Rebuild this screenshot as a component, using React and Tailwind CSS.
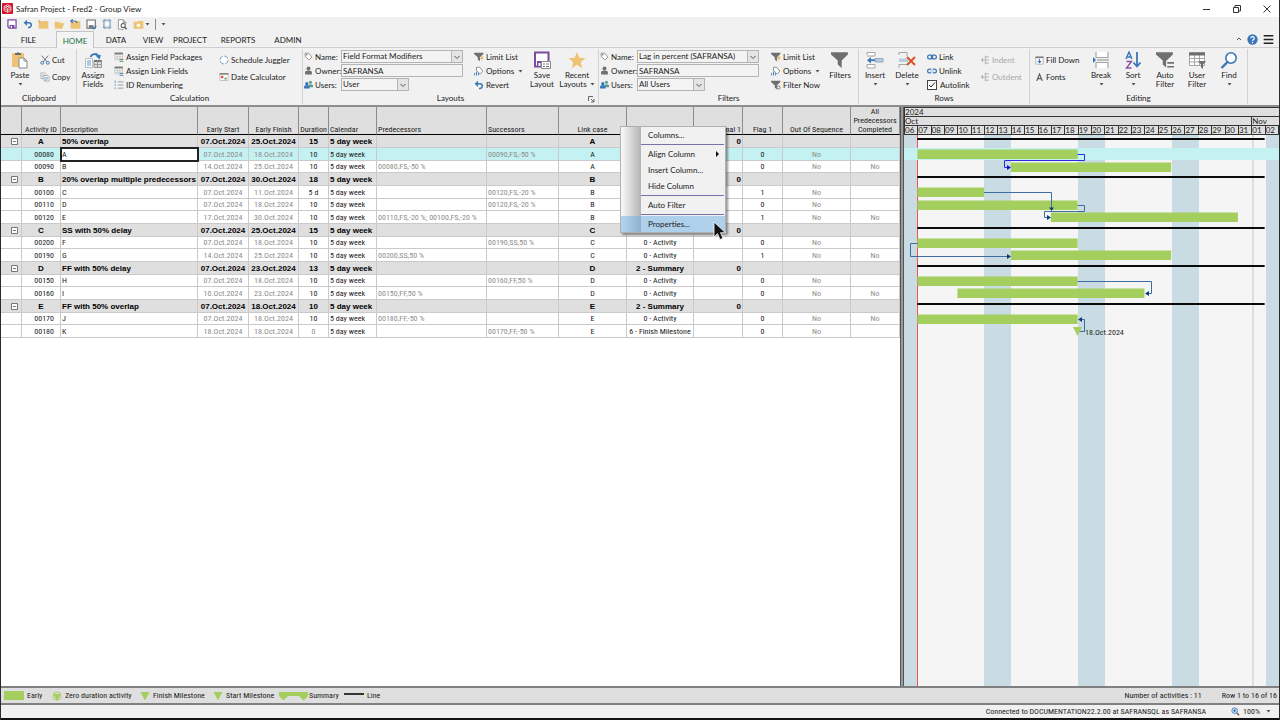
import { useState } from "react";

const DAYS = [
  "06", "07", "08", "09", "10", "11", "12", "13", "14", "15", "16", "17", "18", "19",
  "20", "21", "22", "23", "24", "25", "26", "27", "28", "29", "30", "31", "01", "02",
];
const WEEKEND = ["06", "12", "13", "19", "20", "26", "27", "02"];

const group = (id, description, finish, duration, type) => ({
  group: true, id, description, start: "07.Oct.2024", finish, duration, link: id, type, decimal: "0",
});

const task = (id, description, start, finish, duration, pred, succ, link, type, flag, done) => ({
  id, description, start, finish, duration, pred, succ, link, type, flag, sequence: "No", done,
});

const ROWS = [
  group("A", "50% overlap", "25.Oct.2024", "15", ""),
  task("00080", "A", "07.Oct.2024", "18.Oct.2024", "10", "", "00090,FS,-50 %", "A", "", "0", ""),
  task("00090", "B", "14.Oct.2024", "25.Oct.2024", "10", "00080,FS,-50 %", "", "A", "", "0", "No"),
  group("B", "20% overlap multiple predecessors", "30.Oct.2024", "18", ""),
  task("00100", "C", "07.Oct.2024", "11.Oct.2024", "5 d", "", "00120,FS,-20 %", "B", "", "1", ""),
  task("00110", "D", "07.Oct.2024", "18.Oct.2024", "10", "", "00120,FS,-20 %", "B", "", "0", ""),
  task("00120", "E", "17.Oct.2024", "30.Oct.2024", "10", "00110,FS,-20 %; 00100,FS,-20 %", "", "B", "", "1", "No"),
  group("C", "SS with 50% delay", "25.Oct.2024", "15", ""),
  task("00200", "F", "07.Oct.2024", "18.Oct.2024", "10", "", "00190,SS,50 %", "C", "0 - Activity", "0", ""),
  task("00190", "G", "14.Oct.2024", "25.Oct.2024", "10", "00200,SS,50 %", "", "C", "0 - Activity", "1", "No"),
  group("D", "FF with 50% delay", "23.Oct.2024", "13", "2 - Summary"),
  task("00150", "H", "07.Oct.2024", "18.Oct.2024", "10", "", "00160,FF,50 %", "D", "0 - Activity", "0", ""),
  task("00160", "I", "10.Oct.2024", "23.Oct.2024", "10", "00150,FF,50 %", "", "D", "0 - Activity", "0", "No"),
  group("E", "FF with 50% overlap", "18.Oct.2024", "10", "2 - Summary"),
  task("00170", "J", "07.Oct.2024", "18.Oct.2024", "10", "00180,FF,-50 %", "", "E", "0 - Activity", "0", "No"),
  task("00180", "K", "18.Oct.2024", "18.Oct.2024", "0", "", "00170,FF,-50 %", "E", "6 - Finish Milestone", "0", ""),
];

/* ---------- icons ---------- */

const Svg = ({ size = 10, box = 16, children }) => (
  <svg width={size} height={size} viewBox={`0 0 ${box} ${box}`} fill="none" className="shrink-0" aria-hidden="true">
    {children}
  </svg>
);

const LogoIcon = () => (
  <Svg size={11}>
    <rect width="16" height="16" rx="1" fill="#d8142c" />
    <path d="M8 2.500 13 5v6l-5 2.500L3 11V5zM3 5l5 3 5-3M8 8v5.500M5.500 3.700l5 2.800M10.500 3.700l-5 2.800M3 8l5 3 5-3" stroke="#fff" strokeWidth="1" />
  </Svg>
);

const SaveIcon = ({ size = 10, color = "#7b4ba0" }) => (
  <Svg size={size}>
    <path d="M1.500 1.500h13v13h-11l-2-2z" stroke={color} strokeWidth="2" fill="#fff" />
    <path d="M4 9.500h8v5H4z" fill={color} />
    <path d="M6 11h2v3H6z" fill="#fff" />
  </Svg>
);

const UndoIcon = ({ size = 10 }) => (
  <Svg size={size}>
    <path d="M3 6h6.500a3.700 3.700 0 0 1 0 7.500H8" stroke="#3b76b8" strokeWidth="2.400" />
    <path d="M6.500 1 1 6l5.500 5z" fill="#3b76b8" />
  </Svg>
);

const FolderIcon = ({ variant }) => (
  <Svg size={11}>
    {variant === "open" ? (
      <path d="M4 6h11l-3 8H1zM1 12V4h4l1 1h6" fill="#eec373" />
    ) : (
      <path d="M1 4h5l2 -1h7v11H1z" fill="#eec373" />
    )}
    {variant === "new" && <path d="M2 1v5M0 3.500h5" stroke="#e8b45a" strokeWidth="1.500" />}
    {variant === "back" && <path d="M1 3h6q3 0 3 3M4 .5 1 3l3 2.500" stroke="#3b76b8" strokeWidth="1.600" />}
    {variant === "star" && <circle cx="8" cy="9" r="2.500" fill="#fff" />}
  </Svg>
);

const SaveAsIcon = () => (
  <Svg size={11}>
    <path d="M1.500 1.500h12v12h-12z" stroke="#666" strokeWidth="1.500" fill="#fff" />
    <path d="M4 9h7v4H4z" fill="#777" />
    <path d="m10 15 5-5" stroke="#3b76b8" strokeWidth="2" />
  </Svg>
);

const PageIcon = () => (
  <Svg size={10}>
    <path d="M2.500 1.500h11v13h-11z" stroke="#888" fill="#fff" />
    <path d="M4.500 0v16M11.500 0v16M1 3h14M1 13h14" stroke="#5b95c9" strokeWidth="1" />
  </Svg>
);

const PreviewIcon = () => (
  <Svg size={11}>
    <path d="M10 15H2V1h7l4 4v2M9 1v4h4" stroke="#888" strokeWidth="1.200" fill="#fff" />
    <circle cx="9" cy="9.500" r="3" stroke="#555" strokeWidth="1.500" />
    <path d="m11 12 3 3" stroke="#555" strokeWidth="2" />
  </Svg>
);

const PasteIcon = () => (
  <Svg size={18} box={18}>
    <rect x="1" y="2" width="12" height="14" fill="#eec373" />
    <path d="M4 4V2h2q1-2 2 0h2v2z" fill="#6b6b6b" />
    <path d="M8 7h5l3 3v7H8z" fill="#fff" stroke="#8a8a8a" />
    <path d="M13 7v3h3" stroke="#8a8a8a" />
  </Svg>
);

const CutIcon = () => (
  <Svg>
    <path d="m3 1 8 10M13 1 5 11" stroke="#6b6b6b" strokeWidth="1.500" />
    <circle cx="3.500" cy="12.500" r="2.300" stroke="#3b76b8" strokeWidth="1.500" />
    <circle cx="12.500" cy="12.500" r="2.300" stroke="#3b76b8" strokeWidth="1.500" />
  </Svg>
);

const CopyIcon = () => (
  <Svg>
    <path d="M1.500 1.500h6l2 2v7h-8z" fill="#fff" stroke="#8a8a8a" />
    <path d="M6.500 5.500h6l2 2v7h-8z" fill="#fff" stroke="#8a8a8a" />
    <path d="M3 5h4M3 7.500h3M8 9h5M8 11h5M8 13h3" stroke="#4b86c2" />
  </Svg>
);

const AssignFieldsIcon = () => (
  <Svg size={18} box={18}>
    <path d="M6.500 6a4.500 4.500 0 0 1 8-1" stroke="#3b76b8" strokeWidth="1.800" />
    <path d="m11.500 4.500 5.500-.5-1.500 4.500z" fill="#3b76b8" />
    <path d="M1.500 7.500h7v9h-7z" fill="#fff" stroke="#bbb" />
    <path d="M3 10h4M3 12h4M3 14h4" stroke="#5b95c9" />
    <path d="M10 9.500h7.500v7H10z" fill="#ddd" stroke="#999" />
    <path d="M10 10h7.500" stroke="#777" strokeWidth="2" />
    <path d="M10 13.500h7.500M13.500 10v6.500" stroke="#999" />
  </Svg>
);

const GridIcon = ({ accent }) => (
  <Svg>
    <path d="M1.500 1.500h12v11h-12zM1.500 7h12M1.500 10h12M5.500 4v8M9.500 4v8" stroke="#b5b5b5" fill="#fff" />
    <path d="M1 2.500h13" stroke="#7b7b7b" strokeWidth="3" />
    <path d="M9 12h6M9 15h6" stroke={accent} strokeWidth="1.500" />
  </Svg>
);

const NumberedIcon = () => (
  <Svg>
    <path d="M2 1v4M.5 8h3M.5 13h3" stroke="#4b86c2" strokeWidth="1.300" />
    <path d="M6 3h9M6 8h9M6 13h9" stroke="#8a8a8a" strokeWidth="1.300" />
  </Svg>
);

const JugglerIcon = () => (
  <Svg>
    <circle cx="8" cy="8" r="6.500" stroke="#4b86c2" strokeWidth="1.200" strokeDasharray="8 2" fill="#fff" />
  </Svg>
);

const CalendarIcon = () => (
  <Svg>
    <path d="M1.500 2.500h13v11h-13z" stroke="#a5a5a5" fill="#fff" />
    <path d="M1 3h14" stroke="#7b7b7b" strokeWidth="2.500" />
    <path d="M3 6h4v4H3z" fill="#d9534f" />
    <path d="M9 9h3v3H9z" fill="#4f8f5a" />
  </Svg>
);

const TagIcon = () => (
  <Svg size={9}>
    <path d="M2 2h6l6 7-5 5-7-6z" fill="#fff" stroke="#777" strokeWidth="1.300" />
    <circle cx="5" cy="5" r="1.300" fill="#555" />
  </Svg>
);

const OwnerIcon = () => (
  <Svg size={9}>
    <circle cx="8" cy="4.500" r="3.500" fill="#6f6f6f" />
    <path d="M2 15v-4q0-3 6-3t6 3v4z" fill="#6f6f6f" />
  </Svg>
);

const UsersIcon = () => (
  <Svg size={9}>
    <circle cx="11.500" cy="4" r="2.700" fill="#5c9e8e" />
    <path d="M8 13V9q4-3 8 0v4z" fill="#5c9e8e" />
    <circle cx="5" cy="6.500" r="3" fill="#3b76b8" />
    <path d="M0 15v-3q0-3 5-3t5 3v3z" fill="#3b76b8" />
  </Svg>
);

const FunnelIcon = ({ size = 10, mark }) => (
  <Svg size={size}>
    <path d="M0 1h15v2L9.500 8.500V15L6 12V8.500L0 3z" fill="#6f6f6f" />
    {mark === "flash" && <path d="m12 7-2 4h3l-2 4 4-5h-2l2-3z" fill="#e6ac3e" />}
    {mark === "lines" && <path d="M9 10.500h7M9 14.500h7" stroke="#f1f1f1" strokeWidth="4" />}
    {mark === "lines" && <path d="M10 10.500h6M10 14h6" stroke="#6f6f6f" strokeWidth="1.500" />}
    {mark === "gear" && <circle cx="12" cy="12" r="2.500" stroke="#6f6f6f" strokeWidth="1.500" fill="#fff" />}
  </Svg>
);

const OptionsIcon = () => (
  <Svg>
    <path d="M4 2h5l5 6-4 5-6-6z" fill="#fff" stroke="#777" strokeWidth="1.300" />
    <path d="M1 15v-4M4 15V9M7 15v-4" stroke="#4b86c2" strokeWidth="1.600" />
  </Svg>
);

const SaveLayoutIcon = () => (
  <Svg size={18} box={18}>
    <path d="M2 1.500h13.500v14H2z" fill="#fff" stroke="#7b4ba0" strokeWidth="2" />
    <path d="M4 10h8v6H4z" fill="#7b4ba0" />
    <path d="M5.500 12h2v3h-2z" fill="#fff" />
    <path d="M8.500 10.500h9v7h-9z" fill="#fff" stroke="#8a8a8a" />
    <path d="M10 13h2M13 13h3M10 15.500h2M13 15.500h3" stroke="#777" />
  </Svg>
);

const StarIcon = () => (
  <Svg size={18} box={18}>
    <path d="m9 1 2.300 5.800 6.200.4-4.800 4 1.600 6L9 13.800 3.700 17.200l1.600-6-4.800-4 6.200-.4z" fill="#eec373" />
  </Svg>
);

const InsertIcon = () => (
  <Svg size={18} box={18}>
    <path d="M1 4V1.500h8V5H1M1 17v-3.500h8V17z" stroke="#a5a5a5" fill="#fff" />
    <path d="M9 7.500h8v3.500H9z" fill="#b9cde0" stroke="#8fa9c0" />
    <path d="M9 9.200H3" stroke="#3b76b8" strokeWidth="1.800" />
    <path d="M5 6 1 9.200 5 12.500z" fill="#3b76b8" />
  </Svg>
);

const DeleteIcon = () => (
  <Svg size={18} box={18}>
    <path d="M1 4V1.500h8V5M1 17v-3.500h8" stroke="#a5a5a5" />
    <path d="M1 7.500h9v3.500H1z" fill="#b9cde0" />
    <path d="m9 6 8 8M17 6l-8 8" stroke="#d9512c" strokeWidth="2" />
  </Svg>
);

const LinkIcon = ({ broken }) => (
  <Svg>
    <rect x="1" y="5" width="8" height="6" rx="3" stroke="#3b76b8" strokeWidth="2" />
    <rect x="7" y="5" width="8" height="6" rx="3" stroke="#3b76b8" strokeWidth="2" />
    {broken && <path d="M8 3v10" stroke="#f1f1f1" strokeWidth="2.500" />}
  </Svg>
);

const IndentIcon = () => (
  <Svg>
    <path d="M1 8h6M4 5v6M8.500 1v14M9 3h5M9 8h5M9 13h5" stroke="#b0b0b0" strokeWidth="1.600" />
  </Svg>
);

const FillDownIcon = () => (
  <Svg size={9}>
    <path d="M1.500 1.500h13v13h-13z" stroke="#8a8a8a" fill="#fff" />
    <path d="M1 2.500h14" stroke="#777" strokeWidth="2.500" />
    <path d="M8 5v6" stroke="#3b76b8" strokeWidth="2" />
    <path d="M4 9h8l-4 4.500z" fill="#3b76b8" />
  </Svg>
);

const FontsIcon = () => (
  <Svg size={9}>
    <path d="M3 14 8 2l5 12M5 10h6" stroke="#5a5a5a" strokeWidth="2.200" />
  </Svg>
);

const BreakIcon = () => (
  <Svg size={18} box={18}>
    <path d="M4 1v5.500h12V1M4 17v-5.500h12V17" stroke="#a5a5a5" strokeWidth="1.200" fill="#fff" />
    <path d="M5 9h12" stroke="#8a8a8a" />
    <path d="m1 6 3 3-3 3z" fill="#3b76b8" />
  </Svg>
);

const SortIcon = () => (
  <Svg size={18} box={18}>
    <path d="m2 8 3-7 3 7M3 6h4" stroke="#3b76b8" strokeWidth="1.400" />
    <path d="M2.500 10.500h5L2.500 17h5" stroke="#8c4fa8" strokeWidth="1.400" />
    <path d="M13 1v14M9.500 11.500 13 15.500l3.500-4" stroke="#3b76b8" strokeWidth="1.800" />
  </Svg>
);

const UserFilterIcon = () => (
  <Svg size={18} box={18}>
    <path d="M1.500 1.500h15v13h-15zM1.500 7.500h15M1.500 11h15M6.500 4v10M11.500 4v10" stroke="#a5a5a5" fill="#fff" />
    <path d="M1 3h16" stroke="#6f6f6f" strokeWidth="3" />
    <path d="M10 10h8l-3 3.500V18l-2-1.500v-3z" fill="#6f6f6f" />
  </Svg>
);

const FindIcon = () => (
  <Svg size={18} box={18}>
    <circle cx="11" cy="7" r="5.200" stroke="#3b76b8" strokeWidth="1.600" fill="#fff" />
    <path d="m7.500 11-6 6" stroke="#3b76b8" strokeWidth="2.400" />
  </Svg>
);

const Caret = () => (
  <svg width="5" height="3" viewBox="0 0 5 3" className="shrink-0" aria-hidden="true">
    <path d="M.5 0h4l-2 2.500z" fill="#555" />
  </svg>
);

/* ---------- title, tabs and ribbon ---------- */

const TitleBar = () => (
  <header className="flex h-[17px] items-center bg-white pl-px pr-[7px]">
    <LogoIcon />
    <h1 className="ml-[3px] flex-1 text-[8px]">Safran Project - Fred2 - Group View</h1>
    <div className="flex items-center gap-[20px]">
      <button aria-label="Minimize">
        <Svg size={10} box={10}><path d="M1 5.500h7" stroke="#333" /></Svg>
      </button>
      <button aria-label="Restore">
        <Svg size={10} box={10}><path d="M1.500 3.500h5v5h-5zM3 3V1.500h5.500V7H7" stroke="#333" /></Svg>
      </button>
      <button aria-label="Close">
        <Svg size={10} box={10}><path d="m1.500 1.500 7 7M8.500 1.500l-7 7" stroke="#333" /></Svg>
      </button>
    </div>
  </header>
);

const QuickAccess = () => (
  <div className="flex h-[14px] items-center gap-[5px] pl-[6px]">
    <button aria-label="Save"><SaveIcon /></button>
    <button aria-label="Undo" className="ml-px"><UndoIcon /></button>
    <button aria-label="New"><FolderIcon variant="new" /></button>
    <button aria-label="Open"><FolderIcon variant="open" /></button>
    <button aria-label="Close project"><FolderIcon variant="back" /></button>
    <button aria-label="Save as"><SaveAsIcon /></button>
    <button aria-label="Page setup"><PageIcon /></button>
    <button aria-label="Print preview"><PreviewIcon /></button>
    <button aria-label="Favorites" className="flex items-center gap-px">
      <FolderIcon variant="star" />
      <Caret />
    </button>
    <span className="h-[11px] w-px bg-[#8a8a8a]" />
    <button aria-label="Customize"><Caret /></button>
  </div>
);

const TABS = [
  { name: "FILE", width: "w-[55px]" },
  { name: "HOME", width: "w-[38px]" },
  { name: "DATA", width: "w-[44px]" },
  { name: "VIEW", width: "w-[30px]" },
  { name: "PROJECT", width: "w-[44px]" },
  { name: "REPORTS", width: "w-[52px]" },
  { name: "ADMIN", width: "w-[48px]" },
];

const TabStrip = () => {
  const [active, setActive] = useState("HOME");

  return (
    <nav className="flex h-[17px] items-stretch border-b border-[#cfcfcf] pr-[5px]">
      {TABS.map((tab) => (
        <button
          key={tab.name}
          onClick={() => setActive(tab.name)}
          className={`${tab.width} pt-[2px] text-[8px] ${
            active === tab.name
              ? "-mb-px border border-b-0 border-[#c4c4c4] bg-[#f4f4f4] text-[#217346]"
              : ""
          }`}
        >
          {tab.name}
        </button>
      ))}
      <div className="ml-auto flex items-center gap-[5px]">
        <Svg size={6} box={6}><path d="m1 4 2-2 2 2" stroke="#555" /></Svg>
        <button aria-label="Help">
          <Svg size={11}>
            <circle cx="8" cy="8" r="7.500" fill="#3b76b8" />
            <path d="M5.500 6.300a2.500 2.500 0 1 1 3.500 2.200q-1 .5-1 1.700M8 11.500v1.800" stroke="#fff" strokeWidth="1.700" />
          </Svg>
        </button>
        <button aria-label="Menu">
          <Svg size={11}><path d="M1 2.500h14M1 8h14M1 13.500h14" stroke="#222" strokeWidth="2" /></Svg>
        </button>
      </div>
    </nav>
  );
};

const RibbonGroup = ({ title, width, launcher, children }) => (
  <section className={`${width} relative flex shrink-0 flex-col border-r border-[#d2d2d2]`}>
    <div className="flex h-[44px] items-start">{children}</div>
    <h2 className="text-center leading-[12px]">{title}</h2>
    {launcher && (
      <button aria-label={`${title} settings`} className="absolute bottom-px right-[3px]">
        <Svg size={7} box={7}><path d="M.5 5V.5H5M3 3l3 3M6 3v3H3" stroke="#666" /></Svg>
      </button>
    )}
  </section>
);

const BigButton = ({ icon, lines, width = "w-[32px]", menu }) => (
  <button className={`${width} flex shrink-0 flex-col items-center pt-[2px] leading-[9px]`}>
    {icon}
    <span className="mt-[2px]">{lines[0]}</span>
    <span className="flex h-[9px] items-center gap-[3px]">
      {lines[1]}
      {menu && <Caret />}
    </span>
  </button>
);

const SmallButton = ({ icon, children, menu, disabled }) => (
  <button
    disabled={disabled}
    className={`flex items-center gap-[2px] whitespace-nowrap leading-[10px] ${disabled ? "text-[#a8a8a8]" : ""}`}
  >
    {icon}
    {children}
    {menu && <span className="pl-[2px]"><Caret /></span>}
  </button>
);

const Stack3 = ({ width, children }) => (
  <div className={`${width} flex shrink-0 flex-col gap-[4px] pt-[3px]`}>{children}</div>
);

const Stack2 = ({ width, children }) => (
  <div className={`${width} flex shrink-0 flex-col gap-[7px] pt-[6px]`}>{children}</div>
);

const Combo = ({ id, value, width }) => (
  <div className={`${width} relative h-[13px]`}>
    <select
      id={id}
      defaultValue={value}
      className="h-full w-full appearance-none border border-[#b4b4b4] bg-[#f3f3f3] pl-px pr-[12px] leading-[11px] outline-none"
    >
      <option>{value}</option>
    </select>
    <span className="pointer-events-none absolute inset-y-0 right-0 flex w-[12px] items-center justify-center border border-[#b4b4b4] bg-[#e4e4e4]">
      <Svg size={8} box={8}><path d="m1.500 3 2.500 2.500L6.500 3" stroke="#555" /></Svg>
    </span>
  </div>
);

const Selector = ({ prefix, name, users }) => (
  <div className="grid shrink-0 grid-cols-[11px_26px_122px] items-center gap-y-px pl-px pt-px">
    <TagIcon />
    <label htmlFor={`${prefix}-name`}>Name:</label>
    <Combo id={`${prefix}-name`} value={name} width="w-full" />
    <OwnerIcon />
    <label htmlFor={`${prefix}-owner`}>Owner:</label>
    <input
      id={`${prefix}-owner`}
      defaultValue="SAFRANSA"
      className="h-[13px] w-full border border-[#b4b4b4] bg-[#f3f3f3] px-px leading-[11px] outline-none"
    />
    <UsersIcon />
    <label htmlFor={`${prefix}-users`}>Users:</label>
    <Combo id={`${prefix}-users`} value={users} width="w-[68px]" />
  </div>
);

const Ribbon = () => (
  <div className="flex h-[57px] overflow-hidden pb-px pl-px pt-px text-[8px]">
    <RibbonGroup title="Clipboard" width="w-[75px]">
      <BigButton icon={<PasteIcon />} lines={["Paste"]} width="w-[36px]" menu />
      <Stack2 width="ml-[2px] w-[36px]">
        <SmallButton icon={<CutIcon />}>Cut</SmallButton>
        <SmallButton icon={<CopyIcon />}>Copy</SmallButton>
      </Stack2>
    </RibbonGroup>

    <RibbonGroup title="Calculation" width="w-[226px]">
      <BigButton icon={<AssignFieldsIcon />} lines={["Assign", "Fields"]} />
      <Stack3 width="ml-[5px] w-[105px]">
        <SmallButton icon={<GridIcon accent="#5b8f6b" />}>Assign Field Packages</SmallButton>
        <SmallButton icon={<GridIcon accent="#4b86c2" />}>Assign Link Fields</SmallButton>
        <SmallButton icon={<NumberedIcon />}>ID Renumbering</SmallButton>
      </Stack3>
      <Stack2 width="w-[80px]">
        <SmallButton icon={<JugglerIcon />}>Schedule Juggler</SmallButton>
        <SmallButton icon={<CalendarIcon />}>Date Calculator</SmallButton>
      </Stack2>
    </RibbonGroup>

    <RibbonGroup title="Layouts" width="w-[296px]" launcher>
      <Selector prefix="layout" name="Field Format Modifiers" users="User" />
      <Stack3 width="ml-[11px] w-[52px]">
        <SmallButton icon={<FunnelIcon mark="flash" />}>Limit List</SmallButton>
        <SmallButton icon={<OptionsIcon />} menu>Options</SmallButton>
        <SmallButton icon={<UndoIcon />}>Revert</SmallButton>
      </Stack3>
      <BigButton icon={<SaveLayoutIcon />} lines={["Save", "Layout"]} />
      <BigButton icon={<StarIcon />} lines={["Recent", "Layouts"]} width="w-[38px]" menu />
    </RibbonGroup>

    <RibbonGroup title="Filters" width="w-[260px]">
      <Selector prefix="filter" name="Lag in percent (SAFRANSA)" users="All Users" />
      <Stack3 width="ml-[12px] w-[53px]">
        <SmallButton icon={<FunnelIcon mark="flash" />}>Limit List</SmallButton>
        <SmallButton icon={<OptionsIcon />} menu>Options</SmallButton>
        <SmallButton icon={<FunnelIcon mark="gear" />}>Filter Now</SmallButton>
      </Stack3>
      <BigButton icon={<FunnelIcon size={18} />} lines={["Filters"]} />
    </RibbonGroup>

    <RibbonGroup title="Rows" width="w-[171px]">
      <BigButton icon={<InsertIcon />} lines={["Insert"]} menu />
      <BigButton icon={<DeleteIcon />} lines={["Delete"]} menu />
      <Stack3 width="ml-[4px] w-[53px]">
        <SmallButton icon={<LinkIcon />}>Link</SmallButton>
        <SmallButton icon={<LinkIcon broken />}>Unlink</SmallButton>
        <label className="relative flex items-center gap-[3px] leading-[10px]">
          <input type="checkbox" defaultChecked className="peer sr-only" />
          <span className="flex size-[10px] items-center justify-center border border-[#444] bg-white">
            <Svg size={8} box={8}><path d="m1 4 2 2 4-4.500" stroke="#222" /></Svg>
          </span>
          Autolink
        </label>
      </Stack3>
      <Stack2 width="w-[44px]">
        <SmallButton icon={<IndentIcon />} disabled>Indent</SmallButton>
        <SmallButton icon={<IndentIcon />} disabled>Outdent</SmallButton>
      </Stack2>
    </RibbonGroup>

    <RibbonGroup title="Editing" width="w-[218px]">
      <Stack2 width="ml-[5px] w-[50px]">
        <SmallButton icon={<FillDownIcon />}>Fill Down</SmallButton>
        <SmallButton icon={<FontsIcon />}>Fonts</SmallButton>
      </Stack2>
      <BigButton icon={<BreakIcon />} lines={["Break"]} menu />
      <BigButton icon={<SortIcon />} lines={["Sort"]} menu />
      <BigButton icon={<FunnelIcon size={18} mark="lines" />} lines={["Auto", "Filter"]} />
      <BigButton icon={<UserFilterIcon />} lines={["User", "Filter"]} />
      <BigButton icon={<FindIcon />} lines={["Find"]} menu />
    </RibbonGroup>
  </div>
);

/* ---------- context menu ---------- */

const MenuItem = ({ children, arrow, active }) => (
  <button
    role="menuitem"
    className={`flex h-[16px] w-full items-center pl-[27px] pr-[5px] ${active ? "bg-[#6cb0e6]/50" : ""}`}
  >
    <span className="flex-1 text-left">{children}</span>
    {arrow && <Svg size={6} box={6}><path d="m2 0 3 3-3 3z" fill="#111" /></Svg>}
  </button>
);

const MenuRule = () => <div role="separator" className="my-px ml-[20px] mr-px h-px bg-[#7474a8]" />;

const ColumnMenu = () => (
  <div
    role="menu"
    className="absolute left-[-7px] top-[19px] z-10 w-[106px] border border-[#b0b0b0] bg-[#f1f1f1] bg-[linear-gradient(to_right,#fafafa,#b4b4b4_20px,#f1f1f1_20px)] font-[Lato,sans-serif] text-[8px] leading-[10px] shadow-[2px_2px_2px_#0006]"
  >
    <MenuItem>Columns...</MenuItem>
    <MenuRule />
    <MenuItem arrow>Align Column</MenuItem>
    <MenuItem>Insert Column...</MenuItem>
    <MenuItem>Hide Column</MenuItem>
    <MenuRule />
    <MenuItem>Auto Filter</MenuItem>
    <MenuRule />
    <MenuItem active>Properties...</MenuItem>
    <svg width="14" height="20" viewBox="0 0 14 20" className="absolute bottom-[-9px] right-[-2px]" aria-hidden="true">
      <path d="M1 1v15l3.500-3.300L7 18.500l3-1.300-2.500-5.500h5z" fill="#111" stroke="#fff" strokeWidth=".8" />
    </svg>
  </div>
);

/* ---------- activity table ---------- */

const COLUMN_WIDTHS = [
  "w-[21px]", "w-[39px]", "w-[137px]", "w-[51px]", "w-[50px]", "w-[30px]", "w-[48px]", "w-[110px]",
  "w-[72px]", "w-[68px]", "w-[67px]", "w-[49px]", "w-[40px]", "w-[68px]", "w-[49px]",
];

const Th = ({ children, align = "text-center" }) => (
  <th scope="col" className={`${align} whitespace-nowrap border-b border-r border-b-black border-r-[#8c8c8c] align-bottom font-normal leading-[9px]`}>
    {children}
  </th>
);

const Td = ({ children, className = "text-center" }) => (
  <td className={`${className} whitespace-nowrap border-b border-r border-[#cacaca] leading-[11px]`}>
    {children}
  </td>
);

// rows repeat 13, 13, 12 so that three of them take 38px
const rowHeight = (index) => (index % 3 === 2 ? "h-[12px]" : "h-[13px]");

const ActivityTable = ({ selected, onSelect }) => (
  <table className="w-[899px] table-fixed border-separate border-spacing-0 text-[8px] text-[#222]">
    <colgroup>
      {COLUMN_WIDTHS.map((width, i) => (
        <col key={i} className={width} />
      ))}
    </colgroup>
    <thead>
      <tr className="h-[28px] bg-[#dfdfdf]">
        <Th />
        <Th>Activity ID</Th>
        <Th align="pl-px text-left">Description</Th>
        <Th>Early Start</Th>
        <Th>Early Finish</Th>
        <Th>Duration</Th>
        <Th align="pl-px text-left">Calendar</Th>
        <Th align="pl-px text-left">Predecessors</Th>
        <Th align="pl-px text-left">Successors</Th>
        <Th>Link case</Th>
        <th scope="col" className="relative border-b border-r border-b-black border-r-[#8c8c8c] font-normal">
          <ColumnMenu />
        </th>
        <Th align="pr-px text-right">Decimal 1</Th>
        <Th>Flag 1</Th>
        <Th>Out Of Sequence</Th>
        <Th>All<br />Predecessors<br />Completed</Th>
      </tr>
    </thead>
    <tbody>
      {ROWS.map((row, index) => (
        <tr
          key={row.id}
          onClick={() => onSelect(row.id)}
          className={`${rowHeight(index)} ${
            row.group
              ? "bg-[#dfdfdf] font-['Liberation_Sans',sans-serif] font-bold text-black"
              : row.id === selected ? "bg-[#c4f1f1]" : "bg-white"
          }`}
        >
          <Td>
            {row.group && (
              <button aria-label={`Collapse ${row.id}`} className="block pl-[10px]">
                <Svg size={7} box={7}><path d="M.5.5h6v6h-6zM2 3.500h3" stroke="#777" fill="#fff" /></Svg>
              </button>
            )}
          </Td>
          <Td className={row.group ? "text-center" : "pr-[6px] text-right"}>{row.id}</Td>
          <Td className={`pl-px text-left ${row.id === selected ? "bg-white outline-2 -outline-offset-1 outline-[#222]" : ""}`}>
            {row.description}
          </Td>
          <Td className={row.group ? "text-center" : "text-center text-[#8c8c8c]"}>{row.start}</Td>
          <Td className={row.group ? "text-center" : "text-center text-[#8c8c8c]"}>{row.finish}</Td>
          <Td className={row.duration === "0" ? "text-center text-[#8c8c8c]" : "text-center"}>{row.duration}</Td>
          <Td className="pl-px text-left">5 day week</Td>
          <Td className="pl-px text-left text-[#8c8c8c]">{row.pred}</Td>
          <Td className="pl-px text-left text-[#8c8c8c]">{row.succ}</Td>
          <Td>{row.link}</Td>
          <Td>{row.type}</Td>
          <Td className="pr-px text-right">{row.decimal}</Td>
          <Td>{row.flag}</Td>
          <Td className="text-center text-[#8c8c8c]">{row.sequence}</Td>
          <Td className="text-center text-[#8c8c8c]">{row.done}</Td>
        </tr>
      ))}
    </tbody>
  </table>
);

/* ---------- gantt ---------- */

const DAY = 374 / 28;

// y is the middle of the row, from and to count days from 06.Oct
const BARS = [
  { y: 19, from: 1, to: 13 },
  { y: 32, from: 8, to: 20 },
  { y: 57, from: 1, to: 6 },
  { y: 70, from: 1, to: 13 },
  { y: 82, from: 11, to: 25 },
  { y: 108, from: 1, to: 13 },
  { y: 120, from: 8, to: 20 },
  { y: 146, from: 1, to: 13 },
  { y: 158, from: 4, to: 18 },
  { y: 184, from: 1, to: 13 },
];

const GanttChart = () => (
  <svg width="374" height="210" viewBox="0 0 374 210" className="relative block" role="img" aria-label="Gantt chart">
    {[3, 41, 92, 130, 168].map((y) => (
      <rect key={y} x={DAY} y={y} width={DAY * 26} height="2" fill="#0a0a0a" />
    ))}
    {BARS.map((bar) => (
      <rect key={bar.y} x={bar.from * DAY} y={bar.y - 4.5} width={(bar.to - bar.from) * DAY} height="9.500" fill="#a4cf5e" />
    ))}
    <g fill="none" stroke="#2a2ae0">
      <path d="M173.500 19.500H180.500V25.500H100.500V32.500H104" />
      <path d="M103 30v5l4-2.500z" fill="#1414d0" stroke="none" />
    </g>
    <g fill="none" stroke="#3d6da3">
      <path d="M80 57.500H147.500V73M173.500 70.500H180.500V76.500H140.500V82.500H144" />
      <path d="M13.500 108.500H6.500V121.500H104" />
      <path d="M173.500 146.500H247.500V158.500H244" />
      <path d="M175 196.500H180.500V184.500H177" />
    </g>
    <g fill="#0d3c7a">
      <path d="M145 72.500h5l-2.500 3.500zM143 80v5l4-2.500zM103 119v5l4-2.500zM245 156v5l-4-2.500zM178 182v5l-4-2.500z" />
    </g>
    <path d="M169 192h9l-4.500 9z" fill="#a4cf5e" />
    <text x="181" y="200" fontSize="8" fill="#222">18.Oct.2024</text>
  </svg>
);

const GanttPane = () => (
  <div className="flex min-w-0 flex-1 flex-col">
    <div className="border-l border-t border-[#333] bg-[#dfdfdf] font-[Lato,sans-serif] text-[8px] leading-[8px] text-[#222]">
      <div className="h-[9px] border-b border-[#333]">2024</div>
      <div className="flex h-[9px] border-b border-[#333]">
        <div className="flex-[26]">Oct</div>
        <div className="flex-[2] border-l border-[#333]">Nov</div>
      </div>
      <div className="grid h-[9px] grid-cols-28 border-b border-[#333]">
        {DAYS.map((day) => (
          <div key={day} className="border-r border-[#333]">{day}</div>
        ))}
      </div>
    </div>
    <div className="relative flex-1 overflow-hidden bg-[#f5f5f5]">
      <div className="absolute inset-0 grid grid-cols-28">
        {DAYS.map((day) => (
          <div key={day} className={WEEKEND.includes(day) ? "bg-[#c9dce4]" : ""}>
            {day === "07" && <div className="h-full w-px bg-[#f25050]" />}
            {day === "01" && <div className="h-full w-[2px] bg-[#dedede]" />}
          </div>
        ))}
      </div>
      <div className="absolute inset-x-0 top-[13px] h-[12px] bg-[#c4f1f1]" />
      <GanttChart />
    </div>
  </div>
);

/* ---------- legend and status ---------- */

const Triangle = () => (
  <Svg size={10} box={10}><path d="M.5 1h9L5 9.500z" fill="#a4cf5e" /></Svg>
);

const LegendBar = () => (
  <div className="flex h-[19px] items-center whitespace-nowrap border-y-2 border-[#808080] bg-[#dfdfdf] pl-[3px] pr-[2px] text-[8px]">
    <div className="flex w-[48px] items-center gap-[3px]">
      <span className="h-[9px] w-[20px] bg-[#a4cf5e]" />
      Early
    </div>
    <div className="flex w-[88px] items-center gap-[3px]">
      <Svg size={10} box={10}>
        <circle cx="5" cy="5" r="4" stroke="#a4cf5e" />
        <path d="M1 3h8L5 9.500z" fill="#a4cf5e" />
      </Svg>
      Zero duration activity
    </div>
    <div className="flex w-[73px] items-center gap-[3px]"><Triangle />Finish Milestone</div>
    <div className="flex w-[66px] items-center gap-[3px]"><Triangle />Start Milestone</div>
    <div className="flex w-[65px] items-center gap-px">
      <svg width="29" height="10" viewBox="0 0 29 10" aria-hidden="true">
        <path d="M0 1h29v4l-4.500 4.500L20 5H9L4.500 9.500 0 5z" fill="#a4cf5e" />
      </svg>
      Summary
    </div>
    <div className="flex items-center gap-[3px]">
      <span className="mb-[4px] h-[2px] w-[20px] bg-[#333]" />
      Line
    </div>
    <span className="ml-auto">Number of activities : 11</span>
    <span className="ml-[20px]">Row 1 to 16 of 16</span>
  </div>
);

const StatusBar = () => (
  <footer className="flex h-[15px] items-center justify-end border-b-2 border-[#111] bg-[#f0f0f0] pr-[8px] text-[8px]">
    <span className="mr-[25px]">Connected to DOCUMENTATION22.2.00 at SAFRANSQL as SAFRANSA</span>
    <button className="flex items-center gap-[3px]">
      <Svg size={9}>
        <circle cx="6.500" cy="6.500" r="5" stroke="#3b76b8" strokeWidth="1.500" fill="#cfe3f5" />
        <path d="M6.500 4v5M4 6.500h5" stroke="#2b66a8" strokeWidth="1.500" />
        <path d="m10.500 10.500 4 4" stroke="#7a5a30" strokeWidth="2.500" />
      </Svg>
      100%
      <span className="pl-[3px]"><Caret /></span>
    </button>
  </footer>
);

const App = () => {
  const [selected, setSelected] = useState("00080");

  return (
    <div className="flex min-h-screen flex-col border-x border-[#2b2b2b] bg-[#f1f1f1] font-[Lato,sans-serif] text-[#222]">
      <TitleBar />
      <QuickAccess />
      <TabStrip />
      <Ribbon />
      <div className="h-[2px] bg-[#8a8d88]" />
      <main className="flex flex-1 bg-white font-['Roboto_Condensed','Liberation_Sans',sans-serif]">
        <div className="w-[899px] shrink-0">
          <ActivityTable selected={selected} onSelect={setSelected} />
        </div>
        <div className="w-[4px] shrink-0 border-x border-[#555] bg-[#9a9a9a]" />
        <GanttPane />
      </main>
      <div className="font-['Roboto_Condensed','Liberation_Sans',sans-serif]">
        <LegendBar />
        <StatusBar />
      </div>
    </div>
  );
};

export default App;
